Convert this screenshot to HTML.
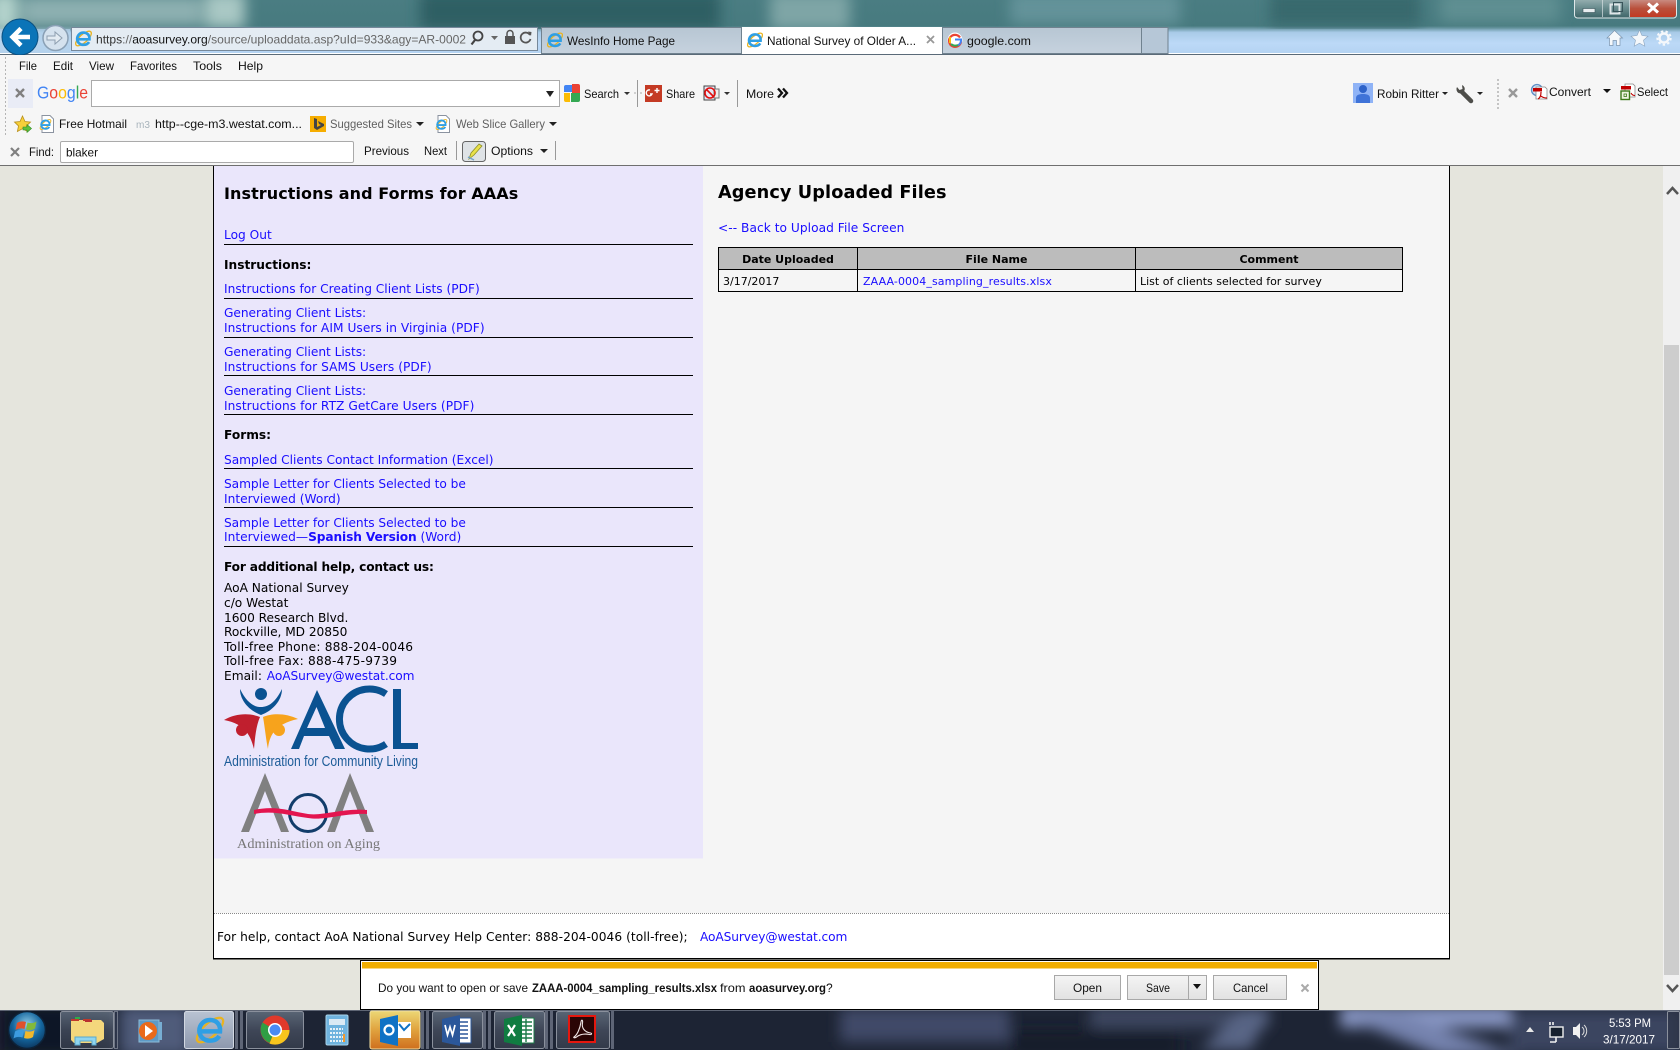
<!DOCTYPE html>
<html lang="en"><head><meta charset="utf-8"><title>National Survey of Older Americans</title>
<style>
html,body{margin:0;padding:0;width:1680px;height:1050px;overflow:hidden;background:#e5e5dd}
#c{position:absolute;left:0;top:0}
.u{font-family:"Liberation Sans",sans-serif;font-size:12px;fill:#111}
.p{position:absolute;font-family:"DejaVu Sans",sans-serif;font-size:12.2px;line-height:16px;color:#000;white-space:nowrap}
.p a,a.p{color:#1a0dff;text-decoration:none}
.h{position:absolute;left:224px;width:469px;height:1px;background:#000}
table{position:absolute;left:718px;top:247px;width:685px;height:45px;border-collapse:collapse;font-family:"DejaVu Sans",sans-serif;font-size:11px;table-layout:fixed}
td,th{border:1px solid #000;padding:1px 4px 0;height:20px;text-align:left;font-weight:normal;white-space:nowrap}
th{background:#bcbcbc;text-align:center;font-weight:bold}
td a{color:#1a0dff;text-decoration:none;margin-left:1px;letter-spacing:.1px}
</style></head><body>
<svg id="c" width="1680" height="1050" viewBox="0 0 1680 1050" xmlns="http://www.w3.org/2000/svg">
<defs>
<clipPath id="topclip"><rect width="1680" height="29"/></clipPath>
<clipPath id="tbclip"><rect y="1010" width="1680" height="40"/></clipPath>
<filter id="b8" x="-30%" y="-60%" width="160%" height="220%"><feGaussianBlur stdDeviation="7"/></filter>
<linearGradient id="sky" x1="0" y1="0" x2="0" y2="1"><stop offset="0" stop-color="#4a7d82"/><stop offset=".48" stop-color="#477a7f"/><stop offset=".6" stop-color="#a9cbe8"/><stop offset=".8" stop-color="#bcd9f7"/><stop offset="1" stop-color="#b4d3f2"/></linearGradient>
<linearGradient id="tabg" x1="0" y1="0" x2="0" y2="1"><stop offset="0" stop-color="#b7c6d3"/><stop offset="1" stop-color="#c6d2de"/></linearGradient>
<linearGradient id="red" x1="0" y1="0" x2="0" y2="1"><stop offset="0" stop-color="#c98a80"/><stop offset=".5" stop-color="#b9503c"/><stop offset="1" stop-color="#c23a22"/></linearGradient>
<linearGradient id="wc" x1="0" y1="0" x2="0" y2="1"><stop offset="0" stop-color="#a8bdbd"/><stop offset=".5" stop-color="#6e9092"/><stop offset="1" stop-color="#3d6467"/></linearGradient>
<linearGradient id="btn" x1="0" y1="0" x2="0" y2="1"><stop offset="0" stop-color="#f4f4f4"/><stop offset="1" stop-color="#e2e2e2"/></linearGradient>
<linearGradient id="tb" x1="0" y1="0" x2="0" y2="1"><stop offset="0" stop-color="#6d7a8a" stop-opacity=".75"/><stop offset=".5" stop-color="#4a5263" stop-opacity=".75"/><stop offset="1" stop-color="#3a4150" stop-opacity=".75"/></linearGradient>
<linearGradient id="tba" x1="0" y1="0" x2="0" y2="1"><stop offset="0" stop-color="#b9c3d2"/><stop offset="1" stop-color="#8d98ad"/></linearGradient>
<linearGradient id="ora" x1="0" y1="0" x2="0" y2="1"><stop offset="0" stop-color="#ecd775"/><stop offset=".5" stop-color="#e0a23e"/><stop offset="1" stop-color="#cf6f1e"/></linearGradient>
<radialGradient id="orb" cx=".5" cy=".35" r=".7"><stop offset="0" stop-color="#8fcbe6"/><stop offset=".55" stop-color="#14669e"/><stop offset="1" stop-color="#0a2f55"/></radialGradient>
<symbol id="ie" viewBox="0 0 24 24"><ellipse cx="12" cy="12" rx="12.500" ry="5" transform="rotate(-42 12 12)" fill="none" stroke="#e9b31f" stroke-width="1.700"/><path d="M4.500 13H19.500C20 7.500 16.500 4.500 12 4.500S4 8 4 12.500 7.500 20 12 20C15 20 17.500 19 19 16.500" fill="none" stroke="#2f9fe4" stroke-width="3.400"/></symbol>
<symbol id="pg" viewBox="0 0 15 18"><path d="M3 .5h8l3.500 3.500v13.500h-11.500z" fill="#fff" stroke="#8b93a0"/><use href="#ie" x="0" y="3" width="13" height="13"/></symbol>
</defs>

<!-- page background -->
<rect width="1680" height="1050" fill="#e5e5dd"/>
<rect x="1663" y="166" width="17" height="844" fill="#f0f0f0"/>
<rect x="1664" y="345" width="15" height="630" fill="#cdcdcd"/>
<path d="M1667 194l5.500-6 5.500 6" fill="none" stroke="#555" stroke-width="2.500"/>
<path d="M1667 985l5.500 6 5.500-6" fill="none" stroke="#555" stroke-width="2.500"/>
<rect x="213" y="166" width="1237" height="793" fill="#f5f5f5"/>
<rect x="214" y="913" width="1235" height="45" fill="#fff"/>
<line x1="214" y1="913.500" x2="1449" y2="913.500" stroke="#888" stroke-dasharray="1 1"/>
<rect x="213" y="166" width="1" height="793" fill="#000"/>
<rect x="1449" y="166" width="1" height="793" fill="#000"/>
<rect x="213" y="958" width="1237" height="1.500" fill="#000"/>
<rect x="214" y="166" width="489" height="692.500" fill="#eae6fb"/>

<!-- ACL logo -->
<g>
<circle cx="261" cy="694" r="6" fill="#0a5291"/>
<path d="M240 689C247 703 254 707 261 707S275 703 282 689C282 701 272 711 261 715C250 711 240 701 240 689Z" fill="#0a5291"/>
<path d="M224 720C236 713 250 713 260 717C256 726 255 738 254 749C251 737 246 724 224 720Z" fill="#c01f2e"/>
<circle cx="242" cy="730" r="6" fill="#c01f2e"/>
<path d="M298 719C286 713 272 713 263 717C265 728 266 740 268 749C269 737 274 724 298 719Z" fill="#f7a31c"/>
<circle cx="279" cy="730" r="6" fill="#f7a31c"/>
<path d="M291 749L317 690L345 749H335L329 736H304L299 749ZM307 728H325L316.500 707Z" fill="#0a5291"/>
<path d="M386 694A30 30 0 1 0 386 744" fill="none" stroke="#0a5291" stroke-width="7"/>
<path d="M393 689h8v54h17v6h-25z" fill="#0a5291"/>
<text x="224" y="766" font-family="'Liberation Sans',sans-serif" font-size="15" fill="#1c5c98" textLength="194" lengthAdjust="spacingAndGlyphs">Administration for Community Living</text>
</g>
<!-- AoA logo -->
<g>
<path d="M241 832L265 773L289 832H281L265 791L249 832Z" fill="#808080"/>
<path d="M327 832L350 773L374 832H366L350 791L335 832Z" fill="#808080"/>
<circle cx="308" cy="813" r="18.500" fill="none" stroke="#123d6b" stroke-width="3"/>
<path d="M254 810C275 805 290 811 308 814C325 816 342 808 367 810V814C342 813 325 821 308 818C290 816 275 810 254 814Z" fill="#e3154f"/>
<text x="237" y="848" font-family="'Liberation Serif',serif" font-size="14" fill="#777" textLength="143" lengthAdjust="spacingAndGlyphs">Administration on Aging</text>
</g>

<!-- sky / title area -->
<rect width="1680" height="54" fill="url(#sky)"/>
<g clip-path="url(#topclip)"><g filter="url(#b8)">
<rect x="-10" y="-8" width="28" height="40" fill="#b4d3cc"/>
<rect x="22" y="-4" width="180" height="30" fill="#8db0b1"/>
<rect x="205" y="-8" width="40" height="36" fill="#a9c8c4"/>
<rect x="420" y="-8" width="300" height="38" fill="#2f5f63"/>
<rect x="770" y="-8" width="80" height="38" fill="#7ea5a6"/>
<rect x="1010" y="-8" width="170" height="32" fill="#64939a"/>
<rect x="1270" y="-8" width="150" height="34" fill="#37696d"/>
<rect x="1440" y="-8" width="120" height="30" fill="#5f8f92"/>
</g></g>
<rect y="29" width="70" height="24" fill="#b5d2ea" opacity=".7"/>
<rect y="53" width="1680" height="1" fill="#fff"/>
<rect y="54" width="1680" height="1" fill="#5a6a78"/>

<!-- back / forward / address -->
<rect x="71.500" y="27.500" width="466" height="23" fill="#e4ecf3" stroke="#76889a"/>
<circle cx="20" cy="37" r="18" fill="#0b74b8" stroke="#0a4f80"/>
<path d="M30 37H13M21 28.500L12.500 37 21 45.500" fill="none" stroke="#fff" stroke-width="4.500"/>
<circle cx="55.500" cy="38" r="12.500" fill="#d5e2ee" stroke="#8aa0b5" stroke-width="1.500"/>
<path d="M47 36h8v-4l7 6-7 6v-4h-8z" fill="#e3ebf2" stroke="#8e9fb0"/>
<use href="#ie" x="74" y="29" width="19" height="19"/>
<text class="u" y="43.500" x="96" font-size="12.500" textLength="370" lengthAdjust="spacingAndGlyphs"><tspan fill="#333">https</tspan><tspan fill="#666">://</tspan><tspan fill="#111">aoasurvey.org</tspan><tspan fill="#666">/source/uploaddata.asp?uId=933&amp;agy=AR-0002</tspan></text>
<circle cx="478" cy="36" r="4.500" fill="none" stroke="#444" stroke-width="1.800"/><path d="M475 40l-3.500 4.500" stroke="#444" stroke-width="2.200"/>
<path d="M491 36h7l-3.500 4z" fill="#666"/>
<rect x="505" y="36" width="10" height="8" fill="#555"/><path d="M507 36v-2.500a3 3 0 0 1 6 0V36" fill="none" stroke="#555" stroke-width="1.500"/>
<path d="M530 35a5 5 0 1 0 .500 4" fill="none" stroke="#555" stroke-width="1.800"/><path d="M528 31.500l3.500 .5-.5 4z" fill="#555"/>

<!-- tabs -->
<rect x="541.500" y="27.500" width="200" height="26" fill="url(#tabg)" stroke="#70828f"/>
<use href="#ie" x="546" y="31" width="18" height="18"/>
<text class="u" x="567" y="45" textLength="108" lengthAdjust="spacingAndGlyphs">WesInfo Home Page</text>
<rect x="742" y="27" width="200" height="27" fill="#fff"/>
<use href="#ie" x="746" y="31" width="18" height="18"/>
<text class="u" x="767" y="45" textLength="149" lengthAdjust="spacingAndGlyphs">National Survey of Older A...</text>
<path d="M927 36l7 7m0-7l-7 7" stroke="#999" stroke-width="1.800"/>
<rect x="942.500" y="27.500" width="199" height="26" fill="url(#tabg)" stroke="#70828f"/>
<rect x="1141.500" y="27.500" width="26.500" height="26" fill="#b6c7d7" stroke="#70828f"/>
<circle cx="955" cy="40" r="7.500" fill="#fff"/>
<path d="M960 37.500A6 6 0 1 0 961 41.500" fill="none" stroke="#ea4335" stroke-width="2.200"/><path d="M955 39.500h6v1.500c-.3 2-1.500 3.500-3 4.300" fill="none" stroke="#4285f4" stroke-width="2"/><path d="M950 37v6" stroke="#fbbc05" stroke-width="2"/><path d="M951 44c2 2 5 2 7 1" fill="none" stroke="#34a853" stroke-width="2"/>
<text class="u" x="967" y="45" textLength="64" lengthAdjust="spacingAndGlyphs">google.com</text>

<!-- window controls -->
<rect x="1574.500" y="-4" width="102" height="22" rx="3" fill="url(#wc)" stroke="#dfe8ea"/>
<path d="M1630 0h46v14a3 3 0 0 1-3 3h-43z" fill="url(#red)"/>
<path d="M1602.500 0v17M1629.500 0v17" stroke="#d6e0e2" stroke-opacity=".7"/>
<rect x="1583" y="8.500" width="12" height="4" fill="#e9eef0" stroke="#39545a" stroke-width=".6"/>
<rect x="1610.500" y="4.500" width="9" height="9" fill="none" stroke="#dfe6e8" stroke-width="2"/><rect x="1613.500" y="2.500" width="9" height="9" fill="none" stroke="#39545a" stroke-width="1"/>
<path d="M1648 3.500l10 9m0-9l-10 9" stroke="#fff" stroke-width="3"/>

<path d="M1614.500 30.500L1607 38h2.500v7.500h3.500v-5h3.500v5h3.500V38h2.500z" fill="#f5f8fb" stroke="#7b94ae" stroke-width=".7"/>
<path d="M1639.500 30l2.500 5.500 6 .7-4.500 4 1.300 6-5.300-3-5.300 3 1.300-6-4.500-4 6-.7z" fill="#f5f8fb" stroke="#8aa3bd" stroke-width=".6"/>
<circle cx="1664" cy="38" r="4.500" fill="none" stroke="#f5f8fb" stroke-width="2.400"/><circle cx="1664" cy="38" r="6.700" fill="none" stroke="#f5f8fb" stroke-width="2" stroke-dasharray="2.400 2.300"/>

<!-- toolbars -->
<rect y="55" width="1680" height="110" fill="#f6f6f6"/>
<rect y="165" width="1680" height="1" fill="#6f6f6f"/>
<line x1="5.500" y1="57" x2="5.500" y2="136" stroke="#b5b5b5" stroke-dasharray="2 2"/>

<text class="u" x="19" y="70" textLength="18" lengthAdjust="spacingAndGlyphs">File</text>
<text class="u" x="53" y="70" textLength="20" lengthAdjust="spacingAndGlyphs">Edit</text>
<text class="u" x="89" y="70" textLength="25" lengthAdjust="spacingAndGlyphs">View</text>
<text class="u" x="130" y="70" textLength="47" lengthAdjust="spacingAndGlyphs">Favorites</text>
<text class="u" x="193" y="70" textLength="29" lengthAdjust="spacingAndGlyphs">Tools</text>
<text class="u" x="238" y="70" textLength="25" lengthAdjust="spacingAndGlyphs">Help</text>

<rect x="8" y="79" width="25" height="29" fill="#e9ecf6"/>
<path d="M16 89l8 8m0-8l-8 8" stroke="#808080" stroke-width="2.400"/>
<text x="37" y="98.500" font-family="'Liberation Sans',sans-serif" font-size="17.500" textLength="51" lengthAdjust="spacingAndGlyphs"><tspan fill="#4285f4">G</tspan><tspan fill="#ea4335">o</tspan><tspan fill="#fbbc05">o</tspan><tspan fill="#4285f4">g</tspan><tspan fill="#34a853">l</tspan><tspan fill="#ea4335">e</tspan></text>
<rect x="91.500" y="80.500" width="468" height="26" fill="#fff" stroke="#aaa"/>
<path d="M546 91h8l-4 6z" fill="#222"/>
<path d="M564 87a2 2 0 0 1 2-2h6v7h-8z" fill="#4285f4"/><path d="M572 84h6a2 2 0 0 1 2 2v7h-8z" fill="#ea4335"/><path d="M564 93h6v9h-4a2 2 0 0 1-2-2z" fill="#fbbc05"/><path d="M571 93h9v7a2 2 0 0 1-2 2h-7z" fill="#34a853"/>
<text class="u" x="584" y="98" textLength="35" lengthAdjust="spacingAndGlyphs">Search</text>
<path d="M624 92h6l-3 3z" fill="#333"/>
<path d="M634 93h2M640 93h2" stroke="#aaa"/>
<rect x="637" y="80" width="1" height="27" fill="#999"/>
<rect x="645" y="85" width="17" height="17" fill="#c43a24"/>
<path d="M650 90a3 3 0 1 0 2 4h-2M657 88v5M654.500 90.500h5" fill="none" stroke="#fff" stroke-width="1.400"/>
<text class="u" x="666" y="98" textLength="29" lengthAdjust="spacingAndGlyphs">Share</text>
<rect x="704" y="86" width="11" height="14" fill="#e8e8f6" stroke="#444"/><rect x="714" y="89" width="5" height="9" fill="#eee" stroke="#777"/>
<circle cx="710" cy="93" r="5" fill="none" stroke="#e01010" stroke-width="1.600"/><path d="M706 89l8 8" stroke="#e01010" stroke-width="1.600"/>
<path d="M724 92h6l-3 3z" fill="#333"/>
<rect x="737" y="80" width="1" height="27" fill="#999"/>
<text class="u" x="746" y="98" textLength="28" lengthAdjust="spacingAndGlyphs">More</text>
<path d="M778 88.500l4 4.500-4 4.500M783 88.500l4 4.500-4 4.500" fill="none" stroke="#111" stroke-width="2.300"/>

<path d="M22.500 116l2.500 5.500 5.500.6-4 3.800 1.100 5.600-5.100-2.800-5.100 2.800 1.100-5.600-4-3.800 5.500-.6z" fill="#f6cf3a" stroke="#b8901c" stroke-width=".8"/><path d="M23 127h4v-2.500l4.500 4-4.500 4V130h-4z" fill="#5ec23f" stroke="#2f8a24" stroke-width=".6"/>
<use href="#pg" x="39" y="115" width="15" height="18"/>
<text class="u" x="59" y="128" textLength="68" lengthAdjust="spacingAndGlyphs">Free Hotmail</text>
<text x="136" y="128" font-family="'Liberation Sans',sans-serif" font-size="10" fill="#a8b4bc" textLength="14" lengthAdjust="spacingAndGlyphs">m3</text>
<text class="u" x="155" y="128" textLength="147" lengthAdjust="spacingAndGlyphs">http--cge-m3.westat.com...</text>
<rect x="310" y="116" width="16" height="16" fill="#f6ad00"/><path d="M314 118l3 1v8l4-2-2-1-1-3 6 3v2l-7 4-3-2z" fill="#444"/>
<text class="u" x="330" y="128" style="fill:#5f5f5f" textLength="82" lengthAdjust="spacingAndGlyphs">Suggested Sites</text>
<path d="M416 122h8l-4 4z" fill="#222"/>
<use href="#pg" x="435" y="115" width="15" height="18"/>
<text class="u" x="456" y="128" style="fill:#5f5f5f" textLength="89" lengthAdjust="spacingAndGlyphs">Web Slice Gallery</text>
<path d="M549 122h8l-4 4z" fill="#222"/>

<path d="M11 148l8 8m0-8l-8 8" stroke="#808080" stroke-width="2.200"/>
<text class="u" x="29" y="156" textLength="25" lengthAdjust="spacingAndGlyphs">Find:</text>
<rect x="60.500" y="141.500" width="293" height="21" rx="1.500" fill="#fff" stroke="#aaa"/>
<text class="u" x="66" y="156.500" textLength="32" lengthAdjust="spacingAndGlyphs">blaker</text>
<text class="u" x="364" y="155" textLength="45" lengthAdjust="spacingAndGlyphs">Previous</text>
<text class="u" x="424" y="155" textLength="23" lengthAdjust="spacingAndGlyphs">Next</text>
<rect x="456" y="141" width="1" height="19" fill="#999"/>
<rect x="462.500" y="141.500" width="23" height="20" rx="3" fill="#dfe3e6" stroke="#666"/>
<path d="M469 159l2-6 8-9 3 2-8 9z" fill="#e9e14a" stroke="#8e8f25" stroke-width=".8"/><path d="M468 157l6 3" stroke="#73a4c9" stroke-width="1.500"/>
<text class="u" x="491" y="155" textLength="42" lengthAdjust="spacingAndGlyphs">Options</text>
<path d="M540 149h8l-4 4z" fill="#222"/>
<rect x="555" y="141" width="1" height="19" fill="#999"/>

<rect x="1353" y="83" width="20" height="20" fill="#8fb3f6"/><circle cx="1363" cy="89" r="4" fill="#2d62c9"/><path d="M1356 103v-5c0-3 3-4 7-4s7 1 7 4v5z" fill="#3f73d8"/>
<text class="u" x="1377" y="98" textLength="62" lengthAdjust="spacingAndGlyphs">Robin Ritter</text>
<path d="M1442 92h6l-3 3z" fill="#222"/>
<path d="M1462 92l9 9" stroke="#4e4e4a" stroke-width="4.500" stroke-linecap="round"/><path d="M1464.500 87.500a4.500 4.500 0 0 1-6 5.500 4.500 4.500 0 0 1-1.500-6l2.500 3 3-1-.5-4a4.500 4.500 0 0 1 2.500 2.500z" fill="#4e4e4a"/>
<path d="M1477 92h6l-3 3z" fill="#222"/>
<line x1="1498" y1="79" x2="1498" y2="109" stroke="#c4c4c4" stroke-width="2" stroke-dasharray="2 2"/>
<path d="M1509 89l8 8m0-8l-8 8" stroke="#999" stroke-width="2.400"/>
<circle cx="1537" cy="90" r="5.500" fill="#cfe0f2" stroke="#5e8ec6" stroke-width="1.300"/><path d="M1536 87h9l2 2v10h-11z" fill="#fff" stroke="#888" stroke-width=".8"/><rect x="1533" y="88" width="9" height="3.500" fill="#c00000"/><path d="M1541 92c0 4-1 6-3 7m3-3c2 2 4 2 6 2" fill="none" stroke="#c00000" stroke-width="1.200"/>
<text class="u" x="1549" y="96" textLength="42" lengthAdjust="spacingAndGlyphs">Convert</text>
<path d="M1603 89h8l-4 4z" fill="#111"/>
<path d="M1625 84h8l2 2v11h-10z" fill="#fff" stroke="#888" stroke-width=".8"/><rect x="1621" y="86" width="10" height="3.500" fill="#c00000"/><rect x="1621" y="91" width="8.500" height="8.500" fill="#eef4e0" stroke="#3e7a1a" stroke-width="1.400"/><rect x="1624" y="94" width="2.500" height="2.500" fill="none" stroke="#3e7a1a" stroke-width=".8"/><path d="M1631 93c1 2 2 2.500 4 2.500" fill="none" stroke="#c00000"/>
<text class="u" x="1637" y="96" textLength="31" lengthAdjust="spacingAndGlyphs">Select</text>

<!-- notification bar -->
<rect x="360" y="960" width="959" height="50" fill="#000"/>
<rect x="361" y="961" width="957" height="48" fill="#fff"/>
<rect x="362" y="962" width="955" height="6.500" fill="#f0ad00"/>
<text class="u" x="378" y="992" textLength="150" lengthAdjust="spacingAndGlyphs">Do you want to open or save</text>
<text class="u" x="532" y="992" font-weight="bold" textLength="185" lengthAdjust="spacingAndGlyphs">ZAAA-0004_sampling_results.xlsx</text>
<text class="u" x="720" y="992" textLength="25.500" lengthAdjust="spacingAndGlyphs">from</text>
<text class="u" x="749" y="992" font-weight="bold" textLength="77" lengthAdjust="spacingAndGlyphs">aoasurvey.org</text>
<text class="u" x="826" y="992">?</text>
<rect x="1054.500" y="975.500" width="66" height="24" fill="url(#btn)" stroke="#a8a8a8"/>
<text class="u" x="1073" y="992" textLength="29" lengthAdjust="spacingAndGlyphs">Open</text>
<rect x="1127.500" y="975.500" width="79" height="24" fill="url(#btn)" stroke="#a8a8a8"/>
<rect x="1188" y="976" width="1" height="23" fill="#a8a8a8"/>
<text class="u" x="1146" y="992" textLength="24" lengthAdjust="spacingAndGlyphs">Save</text>
<path d="M1193 984h8l-4 5z" fill="#111"/>
<rect x="1213.500" y="975.500" width="73" height="24" fill="url(#btn)" stroke="#a8a8a8"/>
<text class="u" x="1233" y="992" textLength="35" lengthAdjust="spacingAndGlyphs">Cancel</text>
<path d="M1301.500 984.500l7 7m0-7l-7 7" stroke="#aaa" stroke-width="2"/>

<!-- taskbar -->
<rect y="1010" width="1680" height="40" fill="#1d2434"/>
<g clip-path="url(#tbclip)"><g filter="url(#b8)">
<rect x="0" y="1005" width="110" height="50" fill="#111726"/>
<rect x="120" y="1006" width="70" height="50" fill="#4f5c7a"/>
<rect x="840" y="1008" width="170" height="34" fill="#3f4a68"/>
<rect x="1010" y="1030" width="170" height="30" fill="#141a2a"/>
<rect x="1090" y="1006" width="180" height="22" fill="#3d4660"/>
<path d="M1200 1050L1240 1012H1270L1250 1050Z" fill="#596585"/>
<rect x="1340" y="1006" width="170" height="22" fill="#8795c2"/>
<path d="M1400 1014L1520 1056H1440L1350 1020Z" fill="#7482ad"/>
<rect x="1510" y="1010" width="170" height="44" fill="#3b4460"/>
</g></g>
<rect y="1010" width="1680" height="1" fill="#7a8290" opacity=".7"/>
<!-- start -->
<circle cx="27" cy="1030" r="18.500" fill="url(#orb)" stroke="#0d2238" stroke-width="1.500"/>
<path d="M17 1023c3-2 6-2 9-1l-1.500 7c-3-1-6-1-9 1z" fill="#e0512c"/><path d="M27.500 1022.500c3 1 6 1 9-1l-1.500 7c-3 2-6 2-9 1z" fill="#82b93a"/><path d="M15 1031.500c3-2 6-2 9-1l-1.500 7c-3-1-6-1-9 1z" fill="#3c9ce0"/><path d="M25.500 1031c3 1 6 1 9-1l-1.500 7c-3 2-6 2-9 1z" fill="#f1b82c"/>
<!-- buttons -->
<rect x="60.500" y="1011.500" width="53" height="37" rx="2" fill="url(#tb)" stroke="#8a909c"/>
<rect x="114.500" y="1011.500" width="3" height="37" fill="none" stroke="#6f7686"/>
<path d="M71 1020h30l3 3v16l-7 4H74l-3-3z" fill="#f4d77c"/><path d="M71 1020h8M83 1020h8" stroke="#c0392b" stroke-width="2"/><path d="M75 1018h5" stroke="#2fae49" stroke-width="2"/><path d="M85 1021h7" stroke="#b93030" stroke-width="2"/>
<path d="M75 1037h21v8h-4v-4H80v4h-5z" fill="#8fd5ef" stroke="#5aa8cc"/>
<rect x="139" y="1020" width="20" height="22" fill="#5e9ac5" stroke="#8cbcd9"/><rect x="159" y="1022" width="3" height="18" fill="#77aed2"/><circle cx="148" cy="1031" r="9" fill="#e96a1b"/><path d="M145 1025l8 6-8 6z" fill="#fff"/>
<rect x="184.500" y="1011.500" width="49" height="37" rx="2" fill="url(#tba)" stroke="#d2d8e2"/>
<rect x="235" y="1011" width="3" height="38" fill="#5e6576"/><rect x="240" y="1011" width="3" height="38" fill="#5e6576"/>
<use href="#ie" x="194" y="1013" width="32" height="34"/>
<rect x="246.500" y="1011.500" width="57" height="37" rx="2" fill="url(#tb)" stroke="#8a909c"/>
<circle cx="275" cy="1030" r="14.500" fill="#e0392b"/><path d="M275 1030l-12.500-7.500a14.500 14.500 0 0 0 7 20.500z" fill="#2f9e44"/><path d="M275 1030h14.500a14.500 14.500 0 0 1-20 13.500z" fill="#f8c51d"/><circle cx="275" cy="1030" r="7" fill="#fff"/><circle cx="275" cy="1030" r="5.500" fill="#4b8bf4"/>
<rect x="326" y="1015" width="22" height="30" rx="1.500" fill="#6fb3de" stroke="#a9d3ea"/><rect x="329" y="1019" width="16" height="6" fill="#dbeaf4"/><path d="M330 1029h13M330 1033h13M330 1037h13M330 1041h13" stroke="#e8f2f8" stroke-width="2" stroke-dasharray="2 1"/><path d="M344 1034v8" stroke="#f29a2e" stroke-width="2"/>
<rect x="370" y="1011" width="50" height="38" rx="2" fill="url(#ora)" stroke="#f2dfa0"/>
<rect x="421" y="1011" width="3" height="38" fill="#5e6576"/><rect x="426" y="1011" width="3" height="38" fill="#5e6576"/>
<path d="M380 1019l18-4v31l-18-4z" fill="#0f72c5"/><rect x="398" y="1022" width="13" height="16" fill="#fff"/><path d="M399 1024l5 6 6-6" fill="none" stroke="#0f72c5" stroke-width="2"/><circle cx="389" cy="1030" r="4.500" fill="none" stroke="#fff" stroke-width="2.200"/>
<rect x="432.500" y="1011.500" width="50" height="37" rx="2" fill="url(#tb)" stroke="#8a909c"/>
<rect x="483" y="1011" width="3" height="38" fill="#5e6576"/><rect x="488" y="1011" width="3" height="38" fill="#5e6576"/>
<rect x="456" y="1018" width="15" height="25" fill="#fff" stroke="#2b579a"/><path d="M459 1022h9M459 1026h9M459 1030h9M459 1034h9M459 1038h9" stroke="#2b579a" stroke-width="1.600"/>
<path d="M442 1019l18-4v31l-18-4z" fill="#2b579a"/><path d="M445 1025l2.500 10 2.500-8 2.500 8 2.500-10" fill="none" stroke="#fff" stroke-width="1.700"/>
<rect x="494.500" y="1011.500" width="50" height="37" rx="2" fill="url(#tb)" stroke="#8a909c"/>
<rect x="545" y="1011" width="3" height="38" fill="#5e6576"/><rect x="550" y="1011" width="3" height="38" fill="#5e6576"/>
<rect x="518" y="1018" width="16" height="25" fill="#fff" stroke="#1b7a48"/><path d="M520 1022h12M520 1026h12M520 1030h12M520 1034h12M520 1038h12M526 1019v23" stroke="#1b7a48" stroke-width="1.400"/>
<path d="M504 1019l18-4v31l-18-4z" fill="#107c41"/><path d="M508 1025l7 11m0-11l-7 11" stroke="#fff" stroke-width="2.200"/>
<rect x="556.500" y="1011.500" width="53" height="37" rx="2" fill="url(#tb)" stroke="#8a909c"/>
<rect x="611" y="1011" width="3" height="38" fill="#5e6576"/>
<rect x="569" y="1016" width="26" height="26" fill="#2a0505" stroke="#e5170e" stroke-width="2"/>
<path d="M574 1037c3-2 6-8 7-15 .5-3 2-2 1.500 1-1 5 2 9 8 10 2 .500 1 2-1 1.500-5-1-10 0-13 2.500-2 1.500-3.500.5-2.500 0z" fill="none" stroke="#f0e6e6" stroke-width="1.100"/>
<!-- tray -->
<path d="M1526 1032h8l-4-5z" fill="#e8e8e8"/>
<rect x="1550" y="1027" width="13" height="10" fill="#16202e" stroke="#f0f0f0" stroke-width="1.400"/><path d="M1550 1025v-3M1553 1025v-3M1556 1042h-6M1556 1037v5" stroke="#f0f0f0" stroke-width="1.600"/>
<path d="M1573 1027h3l4-4v16l-4-4h-3z" fill="#f0f0f0"/><path d="M1582 1027a5 5 0 0 1 0 8M1584 1025a8 8 0 0 1 0 12" fill="none" stroke="#dcdcdc"/>
<text class="u" x="1609" y="1027" style="fill:#fff" textLength="42" lengthAdjust="spacingAndGlyphs">5:53 PM</text>
<text class="u" x="1603" y="1043.500" style="fill:#fff" textLength="52" lengthAdjust="spacingAndGlyphs">3/17/2017</text>
<rect x="1667.500" y="1011.500" width="12" height="37" rx="1" fill="#2f3648" fill-opacity=".7" stroke="#8a909c"/>
</svg>

<!-- page content -->
<div class="p" style="left:224px;top:186px;font-size:16px;font-weight:bold;letter-spacing:.07px">Instructions and Forms for AAAs</div>
<a class="p" href="#" style="left:224px;top:227px">Log Out</a>
<div class="h" style="top:244px"></div>
<div class="p" style="left:224px;top:257px;font-weight:bold">Instructions:</div>
<a class="p" href="#" style="left:224px;top:281px">Instructions for Creating Client Lists (PDF)</a>
<div class="h" style="top:298px"></div>
<a class="p" href="#" style="left:224px;top:305px;letter-spacing:-.04px">Generating Client Lists:</a>
<a class="p" href="#" style="left:224px;top:320px;letter-spacing:.05px">Instructions for AIM Users in Virginia (PDF)</a>
<div class="h" style="top:337px"></div>
<a class="p" href="#" style="left:224px;top:344px;letter-spacing:-.04px">Generating Client Lists:</a>
<a class="p" href="#" style="left:224px;top:359px;letter-spacing:.06px">Instructions for SAMS Users (PDF)</a>
<div class="h" style="top:375px"></div>
<a class="p" href="#" style="left:224px;top:383px;letter-spacing:-.04px">Generating Client Lists:</a>
<a class="p" href="#" style="left:224px;top:398px;letter-spacing:.05px">Instructions for RTZ GetCare Users (PDF)</a>
<div class="h" style="top:414px"></div>
<div class="p" style="left:224px;top:427px;font-weight:bold">Forms:</div>
<a class="p" href="#" style="left:224px;top:452px;letter-spacing:-.02px">Sampled Clients Contact Information (Excel)</a>
<div class="h" style="top:468px"></div>
<a class="p" href="#" style="left:224px;top:476px;letter-spacing:-.05px">Sample Letter for Clients Selected to be</a>
<a class="p" href="#" style="left:224px;top:491px">Interviewed (Word)</a>
<div class="h" style="top:507px"></div>
<a class="p" href="#" style="left:224px;top:515px;letter-spacing:-.05px">Sample Letter for Clients Selected to be</a>
<a class="p" href="#" style="left:224px;top:529px">Interviewed—<b style="letter-spacing:-.12px">Spanish Version</b> (Word)</a>
<div class="h" style="top:546px"></div>
<div class="p" style="left:224px;top:559px;font-weight:bold;letter-spacing:-.17px">For additional help, contact us:</div>
<div class="p" style="left:224px;top:580px">AoA National Survey</div>
<div class="p" style="left:224px;top:595px">c/o Westat</div>
<div class="p" style="left:224px;top:610px;letter-spacing:-.05px">1600 Research Blvd.</div>
<div class="p" style="left:224px;top:624px;letter-spacing:-.05px">Rockville, MD 20850</div>
<div class="p" style="left:224px;top:639px;letter-spacing:.18px">Toll-free Phone: 888-204-0046</div>
<div class="p" style="left:224px;top:653px;letter-spacing:.24px">Toll-free Fax: 888-475-9739</div>
<div class="p" style="left:224px;top:668px">Email: <a href="#" style="margin-left:1px;letter-spacing:-.08px">AoASurvey@westat.com</a></div>

<div class="p" style="left:718px;top:185px;font-size:17.7px;font-weight:bold;letter-spacing:.1px">Agency Uploaded Files</div>
<a class="p" href="#" style="left:718px;top:220px;letter-spacing:.04px">&lt;-- Back to Upload File Screen</a>
<table>
<colgroup><col style="width:139px"><col style="width:278px"><col></colgroup>
<tr><th>Date Uploaded</th><th>File Name</th><th>Comment</th></tr>
<tr><td>3/17/2017</td><td><a href="#">ZAAA-0004_sampling_results.xlsx</a></td><td>List of clients selected for survey</td></tr>
</table>
<div class="p" style="left:217px;top:929px;letter-spacing:.05px">For help, contact AoA National Survey Help Center: 888-204-0046 (toll-free);</div>
<a class="p" href="#" style="left:700px;top:929px;letter-spacing:-.1px">AoASurvey@westat.com</a>
</body></html>
